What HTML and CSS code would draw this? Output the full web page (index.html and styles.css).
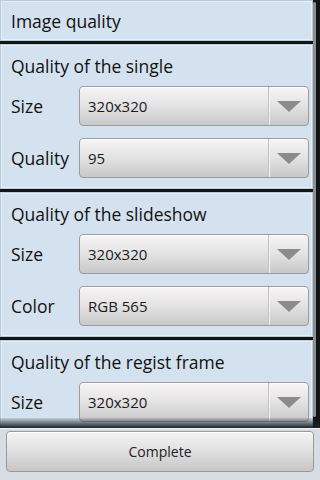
FILE: index.html
```html
<!DOCTYPE html>
<html lang="en">

<head>
  <meta charset="UTF-8">
  <title>Image quality</title>
  <link rel="stylesheet" href="styles.css">
</head>

<body>
  <div class="screen">
    <div class="scroll">
      <div class="panel header">Image quality</div>

      <div class="panel">
        <div class="title">Quality of the single</div>
        <div class="row">
          <span class="label">Size</span>
          <div class="spinner"><span class="value">320x320</span><span class="arrow"></span></div>
        </div>
        <div class="row">
          <span class="label">Quality</span>
          <div class="spinner"><span class="value">95</span><span class="arrow"></span></div>
        </div>
      </div>

      <div class="panel">
        <div class="title">Quality of the slideshow</div>
        <div class="row">
          <span class="label">Size</span>
          <div class="spinner"><span class="value">320x320</span><span class="arrow"></span></div>
        </div>
        <div class="row">
          <span class="label">Color</span>
          <div class="spinner"><span class="value">RGB 565</span><span class="arrow"></span></div>
        </div>
      </div>

      <div class="panel">
        <div class="title">Quality of the regist frame</div>
        <div class="row">
          <span class="label">Size</span>
          <div class="spinner"><span class="value">320x320</span><span class="arrow"></span></div>
        </div>
      </div>

      <div class="scrollbar"></div>
      <div class="fade"></div>
    </div>

    <div class="footer">
      <a href="javascript:;" class="button">Complete</a>
    </div>
  </div>
</body>

</html>
```

FILE: styles.css
```css
body {
  margin: 0;
  background: #000;
  font-family: "Open Sans", "Noto Sans", sans-serif;
  color: #111;
}

.screen {
  width: 320px;
  height: 480px;
  display: flex;
  flex-direction: column;
  overflow: hidden;
}

.scroll {
  position: relative;
  height: 428px;
  flex: none;
  overflow: hidden;
  background: #111518;
  padding-right: 7px;
  display: flex;
  flex-direction: column;
  gap: 3px;
}

.panel {
  flex: none;
  background: #d4e2ef;
  border: 1px solid #b9cadb;
  box-shadow: inset 0 0 0 1px #e6eef6;
  padding: 9px 3px 10px 10px;
}

.header {
  height: 41px;
  box-sizing: border-box;
  padding: 0 10px;
  display: flex;
  align-items: center;
  font-size: 17.5px;
}

.title {
  font-size: 17.5px;
  line-height: 24px;
  margin-bottom: 8px;
}

.row {
  display: flex;
  align-items: center;
}

.row + .row {
  margin-top: 12px;
}

.label {
  width: 68px;
  flex: none;
  font-size: 17.5px;
}

.spinner {
  flex: 1;
  height: 40px;
  box-sizing: border-box;
  border: 1px solid #9c9c9c;
  border-radius: 4px;
  background: linear-gradient(#f6f4f4, #e6e5e5 45%, #c9c8c8);
  box-shadow: inset 0 1px 0 #fff;
  display: flex;
  align-items: center;
}

.value {
  flex: 1;
  padding-left: 8px;
  font-size: 15px;
  color: #1a1a1a;
}

.arrow {
  width: 39px;
  height: 100%;
  flex: none;
  border-left: 1px solid #c2c1c1;
  box-shadow: inset 1px 0 0 #f4f4f4;
  display: flex;
  align-items: center;
  justify-content: center;
}

.arrow::after {
  content: "";
  width: 0;
  height: 0;
  border-left: 12px solid transparent;
  border-right: 12px solid transparent;
  border-top: 11px solid #8b8b8b;
}

.scrollbar {
  position: absolute;
  right: 4px;
  top: 2px;
  width: 3px;
  height: 415px;
  background: #8e8e8e;
  border-radius: 2px;
}

.fade {
  position: absolute;
  left: 0;
  right: 0;
  bottom: 0;
  height: 10px;
  background: linear-gradient(rgba(20, 26, 30, 0.1), #1b2226);
}

.footer {
  flex: 1;
  background: #d7dde3;
  border-top: 1px solid #f2f4f6;
  padding: 2px 6px 8px;
  display: flex;
}

.button {
  flex: 1;
  border: 1px solid #9a9a9a;
  border-radius: 4px;
  background: linear-gradient(#f5f4f4, #e3e2e2 45%, #c8c7c7);
  box-shadow: inset 0 1px 0 #fff;
  display: flex;
  align-items: center;
  justify-content: center;
  text-decoration: none;
  color: #222;
  font-size: 14px;
}
```
